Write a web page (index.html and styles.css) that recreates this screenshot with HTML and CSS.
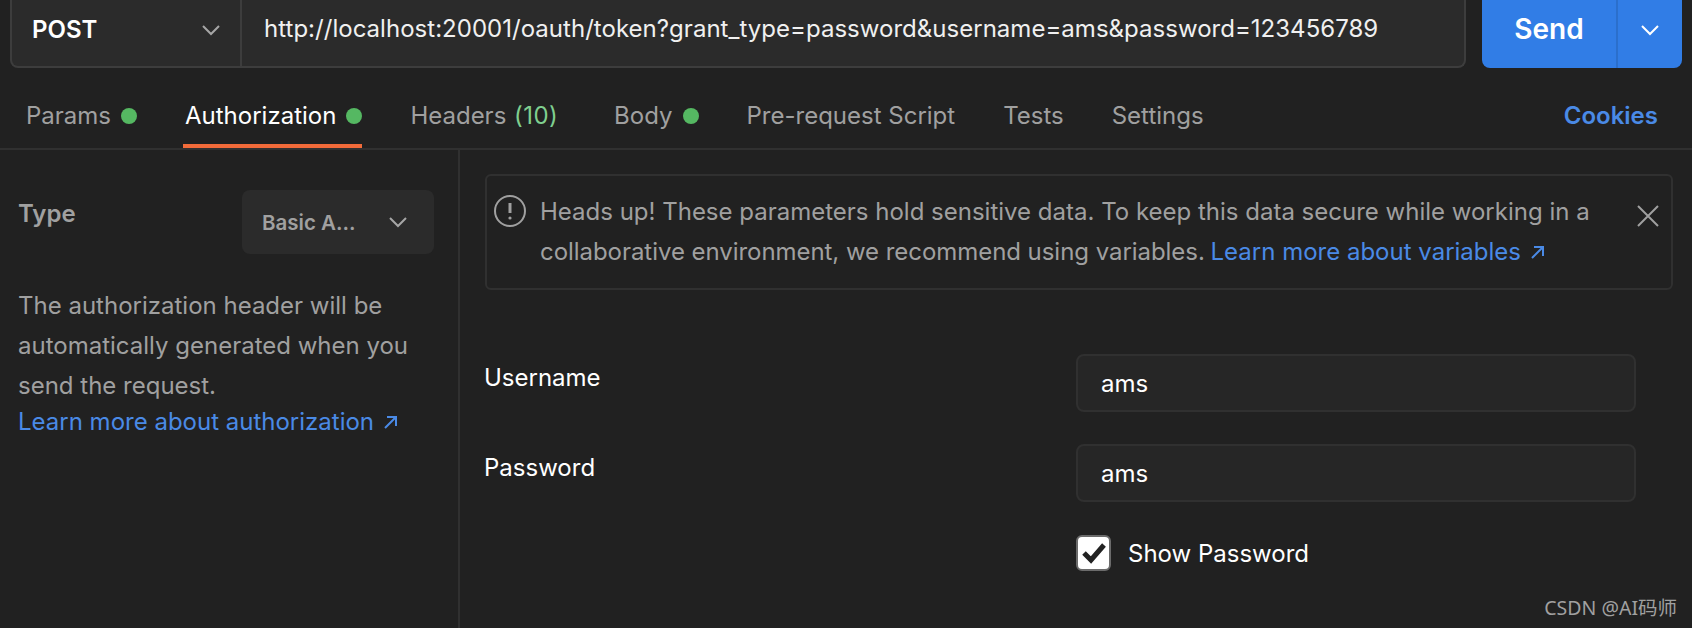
FILE: index.html
```html
<!DOCTYPE html>
<html lang="en">
<head>
    <meta charset="UTF-8">
    <meta name="viewport" content="width=device-width, initial-scale=1.0">
    <title>Basic Auth Request</title>
    <link rel="stylesheet" href="styles.css">
</head>
<body>

    <div class="request-row">
        <div class="url-bar">
            <div class="method">
                <span>POST</span>
                <svg class="chev" width="20" height="12" viewBox="0 0 20 12"><path d="M2 2l8 8 8-8"/></svg>
            </div>
            <div class="url">http://localhost:20001/oauth/token?grant_type=password&amp;username=ams&amp;password=123456789</div>
        </div>
        <div class="send">
            <div class="send-label">Send</div>
            <div class="send-more">
                <svg class="chev" width="20" height="12" viewBox="0 0 20 12"><path d="M2 2l8 8 8-8"/></svg>
            </div>
        </div>
    </div>

    <div class="tabs">
        <div class="tab">Params<i class="dot"></i></div>
        <div class="tab active">Authorization<i class="dot"></i></div>
        <div class="tab wide">Headers <span class="count">(10)</span></div>
        <div class="tab">Body<i class="dot"></i></div>
        <div class="tab">Pre-request Script</div>
        <div class="tab">Tests</div>
        <div class="tab">Settings</div>
        <div class="cookies">Cookies</div>
    </div>

    <div class="content">
        <div class="side">
            <div class="type-row">
                <div class="type-label">Type</div>
                <div class="type-select">
                    <span>Basic A...</span>
                    <svg class="chev" width="20" height="12" viewBox="0 0 20 12"><path d="M2 2l8 8 8-8"/></svg>
                </div>
            </div>
            <p class="help">The authorization header will be automatically generated when you send the request.</p>
            <a class="link side-link">Learn more about authorization <svg class="ext" width="15" height="15" viewBox="0 0 15 15"><path d="M2 13L13 2M4 2h9v9"/></svg></a>
        </div>

        <div class="main">
            <div class="alert">
                <svg class="alert-icon" width="32" height="32" viewBox="0 0 32 32"><circle cx="16" cy="16" r="15"/><path d="M16 8v10"/><circle class="pt" cx="16" cy="23" r="1.6"/></svg>
                <div class="alert-text">
                    <div>Heads up! These parameters hold sensitive data. To keep this data secure while working in a</div>
                    <div><span class="tight">collaborative environment, we recommend using variables.</span> <a class="link alert-link">Learn more about variables <svg class="ext" width="15" height="15" viewBox="0 0 15 15"><path d="M2 13L13 2M4 2h9v9"/></svg></a></div>
                </div>
                <svg class="close" width="24" height="24" viewBox="0 0 24 24"><path d="M2 2l20 20M22 2L2 22"/></svg>
            </div>

            <div class="form">
                <label class="field-label">Username</label>
                <div class="input">ams</div>
                <label class="field-label">Password</label>
                <div class="input">ams</div>
                <div></div>
                <div class="show-pass">
                    <span class="check">
                        <svg width="26" height="22" viewBox="0 0 26 22"><path d="M3 11l7 7L23 3"/></svg>
                    </span>
                    Show Password
                </div>
            </div>
        </div>
    </div>

    <div class="watermark">CSDN @AI码师</div>

</body>
</html>
```
FILE: styles.css
```css
*{
    box-sizing: border-box;
}
body{
    margin: 0;
    height: 628px;
    overflow: hidden;
    position: relative;
    background-color: #212121;
    color: #fff;
    font-family: Inter, "Liberation Sans", sans-serif;
    font-size: 24px;
}
.chev path{
    fill: none;
    stroke: #a6a6a6;
    stroke-width: 2;
}

/* request bar */
.request-row{
    display: flex;
    height: 68px;
    padding: 0 10px;
}
.url-bar{
    display: flex;
    width: 1456px;
    background-color: #2b2b2b;
    border: 2px solid #3d3d3d;
    border-top: none;
    border-radius: 0 0 8px 8px;
}
.method{
    width: 230px;
    display: flex;
    justify-content: space-between;
    align-items: center;
    padding: 0 19px 7px 20px;
    border-right: 2px solid #3d3d3d;
    font-weight: 600;
    font-size: 24px;
}
.url{
    padding: 0 0 10px 22px;
    display: flex;
    align-items: center;
    color: #f0f0f0;
    font-size: 24px;
    letter-spacing: 0.025px;
    white-space: nowrap;
}
.send{
    display: flex;
    width: 200px;
    margin-left: 16px;
    background-color: #317de6;
    border-radius: 0 0 8px 8px;
}
.send-label{
    width: 136px;
    display: flex;
    align-items: center;
    justify-content: center;
    padding-bottom: 10px;
    font-size: 28px;
    font-weight: 600;
    border-right: 2px solid #2b6fcc;
}
.send-more{
    flex: 1;
    display: flex;
    align-items: center;
    justify-content: center;
    padding-bottom: 8px;
}
.send-more .chev path{
    stroke: #fff;
}

/* tabs */
.tabs{
    display: flex;
    gap: 48px;
    height: 82px;
    padding: 0 34px 0 26px;
    border-bottom: 2px solid #303030;
}
.tab{
    display: flex;
    align-items: center;
    gap: 10px;
    height: 80px;
    padding-top: 15px;
    color: #a0a0a0;
    white-space: pre;
}
.tab.active{
    color: #fff;
    position: relative;
}
.tab.active::after{
    content: "";
    position: absolute;
    left: -2px;
    right: 0;
    bottom: 0;
    height: 4px;
    background-color: #f26b3a;
}
.tab.wide{
    margin-right: 8px;
    gap: 0;
}
.count{
    margin-left: 1px;
    letter-spacing: 0.4px;
    color: #7fcf8f;
}
.dot{
    width: 16px;
    height: 16px;
    border-radius: 50%;
    background-color: #55b862;
}
.cookies{
    margin-left: auto;
    padding-top: 15px;
    align-self: center;
    color: #4a8ae6;
    font-weight: 600;
}

/* body of the auth tab */
.content{
    display: flex;
    height: 478px;
}
.side{
    width: 460px;
    padding: 40px 25px 0 18px;
    border-right: 2px solid #303030;
}
.type-row{
    display: flex;
    justify-content: space-between;
    align-items: flex-start;
}
.type-label{
    padding-top: 9px;
    color: #a0a0a0;
    font-weight: 600;
}
.type-select{
    width: 192px;
    height: 64px;
    margin-right: -1px;
    display: flex;
    align-items: center;
    justify-content: space-between;
    padding: 0 26px 0 20px;
    background-color: #2b2b2b;
    border-radius: 8px;
    color: #a0a0a0;
    font-size: 20.5px;
    font-weight: 600;
}
.help{
    margin: 32px 0 0;
    line-height: 40px;
    color: #a0a0a0;
}
.link{
    color: #4a8ae6;
}
.ext{
    margin-left: 2px;
}
.ext path{
    fill: none;
    stroke: #4a8ae6;
    stroke-width: 2;
}
.side-link{
    display: block;
    line-height: 32px;
    white-space: nowrap;
}
.main{
    flex: 1;
    padding: 24px 19px 0 25px;
}
.alert{
    display: flex;
    align-items: flex-start;
    height: 116px;
    padding: 18px 11px 0 7px;
    border: 2px solid #303030;
    border-radius: 6px;
}
.alert-icon{
    flex: none;
    margin-top: 1px;
}
.alert-icon circle{
    fill: none;
    stroke: #a0a0a0;
    stroke-width: 2;
}
.alert-icon path{
    stroke: #a0a0a0;
    stroke-width: 3;
}
.alert-icon .pt{
    fill: #a0a0a0;
    stroke: none;
}
.alert-text{
    flex: 1;
    margin: -2px 0 0 14px;
    line-height: 40px;
    color: #a0a0a0;
}
.tight{
    letter-spacing: -0.05px;
}
.alert-link{
    margin-left: -1px;
}
.close{
    flex: none;
    margin-top: 10px;
}
.close path{
    stroke: #a0a0a0;
    stroke-width: 2;
    fill: none;
}

.form{
    display: grid;
    grid-template-columns: 591px 560px;
    row-gap: 32px;
    margin-top: 64px;
}
.field-label{
    padding-top: 9px;
    margin-left: -1px;
}
.input{
    height: 58px;
    display: flex;
    align-items: center;
    padding-left: 23px;
    background-color: #262626;
    border: 2px solid #303030;
    border-radius: 8px;
}
.show-pass{
    display: flex;
    align-items: center;
    gap: 17px;
    margin-top: 1px;
}
.check{
    width: 35px;
    height: 36px;
    display: flex;
    align-items: center;
    justify-content: center;
    background-color: #fff;
    border: 2px solid #6b6b6b;
    border-radius: 6px;
}
.check path{
    fill: none;
    stroke: #222;
    stroke-width: 5;
}
.watermark{
    position: absolute;
    right: 15px;
    bottom: 7px;
    color: #a0a0a0;
    font-family: "Noto Sans", "Noto Sans CJK SC", sans-serif;
    font-size: 19.5px;
}
```
